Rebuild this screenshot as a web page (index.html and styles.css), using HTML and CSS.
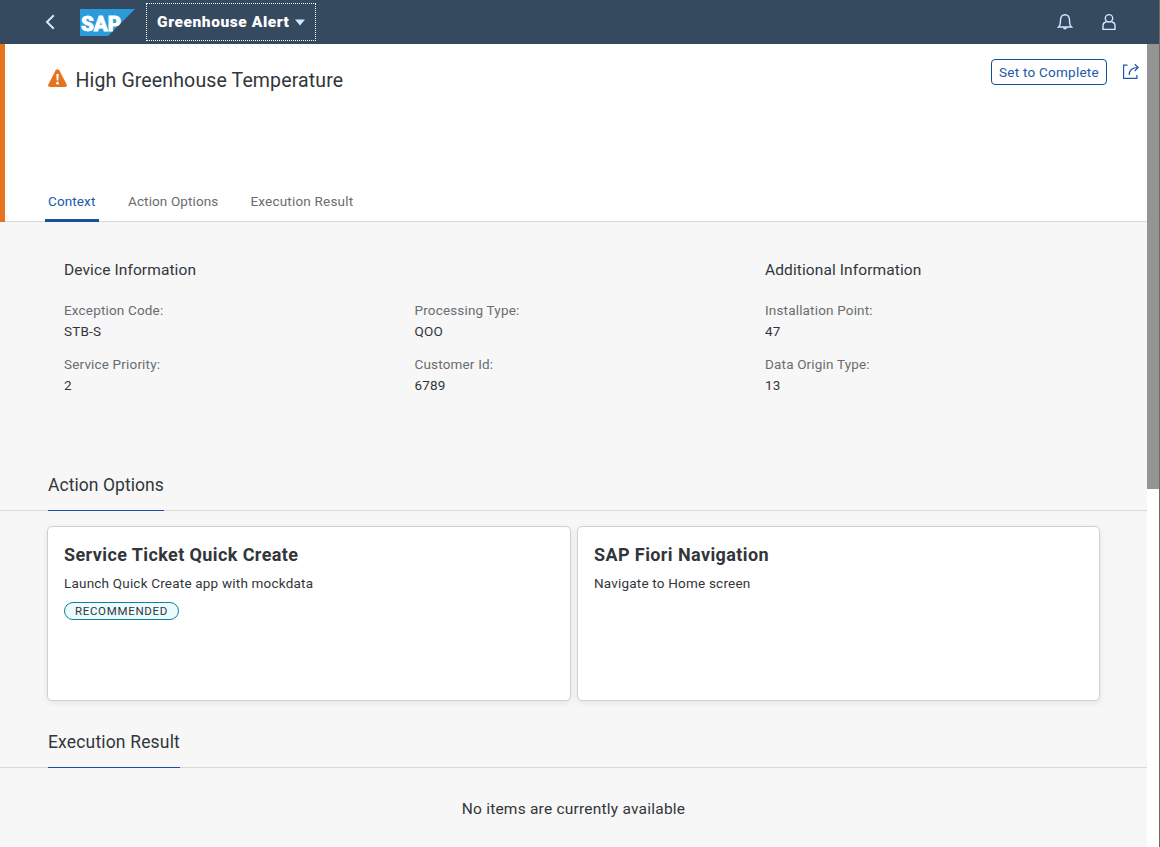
FILE: index.html
```html
<!DOCTYPE html>
<html lang="en">
<head>
<meta charset="utf-8">
<title>Greenhouse Alert</title>
<link rel="stylesheet" href="styles.css">
</head>
<body>
<div class="window">
  <header class="shell">
    <svg class="back" width="10" height="16" viewBox="0 0 10 16"><path d="M8.800 1.300 2 8l6.800 6.700" fill="none" stroke="#d1e8ff" stroke-width="2"/></svg>
    <svg class="logo" width="55" height="27" viewBox="0 0 55 27">
      <path d="M0 0H55L28 27H0Z" fill="#2b9bdc"/>
      <text class="logo-text" x="1" y="21.500" textLength="40" lengthAdjust="spacingAndGlyphs">SAP</text>
    </svg>
    <div class="app-title"><span class="app-name">Greenhouse Alert</span><svg width="10" height="7" viewBox="0 0 10 7"><path d="M0 .5H10L5 6.500Z" fill="#d1e8ff"/></svg></div>
    <div class="shell-tools">
      <svg width="16" height="18" viewBox="0 0 16 18"><path d="M1.500 14C3.500 12.500 3.500 11 3.500 7C3.500 3.500 5.500 1.800 8 1.800S12.500 3.500 12.500 7C12.500 11 12.500 12.500 14.500 14Z" fill="none" stroke="#d1e8ff" stroke-width="1.400"/><path d="M5.500 14.500h5Q9.500 16.500 8 16.500T5.500 14.500ZM7.200 1h1.600v1H7.200Z" fill="#d1e8ff"/></svg>
      <svg width="16" height="18" viewBox="0 0 16 18"><g fill="none" stroke="#d1e8ff" stroke-width="1.400"><circle cx="8" cy="5.300" r="3.700"/><path d="M5.500 8.700C3 9.300 2 10.500 2 12.500V16.400H14V12.500C14 10.500 13 9.300 10.500 8.700"/></g></svg>
    </div>
  </header>
  <div class="viewport">
    <main class="page">
      <section class="object-header">
        <div class="stripe"></div>
        <div class="header-body">
          <div class="title-row">
            <svg width="20" height="19" viewBox="0 0 20 19"><path d="M7.700 1.200Q9.500 -.8 11.300 1.200L18.700 15.400Q19.300 18 17 18H2Q-.3 18 .3 15.400Z" fill="#e6741f"/><path d="M8.300 5h2.400l-.4 6.500H8.700Z" fill="#fff"/><circle cx="9.500" cy="14.200" r="1.400" fill="#fff"/></svg>
            <h1 class="title">High Greenhouse Temperature</h1>
            <button class="complete">Set to Complete</button>
            <svg class="share" width="18" height="17" viewBox="0 0 18 17"><g fill="none" stroke="#2158a8" stroke-width="1.200"><path d="M5.500 2.100H1.600V15.400H14.900V12"/><path d="M7.200 12C7.200 7.500 10 4.500 16 4.500M12.700 1.200 16.200 4.500 12.700 8"/></g></svg>
          </div>
          <nav class="tabs">
            <a class="tab active">Context</a><a class="tab">Action Options</a><a class="tab result">Execution Result</a>
          </nav>
        </div>
      </section>
      <section class="context">
        <div class="group wide">
          <h2 class="group-title">Device Information</h2>
          <div class="fields two">
            <div><div class="label">Exception Code:</div><div class="value">STB-S</div></div>
            <div><div class="label">Processing Type:</div><div class="value">QOO</div></div>
            <div><div class="label">Service Priority:</div><div class="value">2</div></div>
            <div><div class="label">Customer Id:</div><div class="value">6789</div></div>
          </div>
        </div>
        <div class="group">
          <h2 class="group-title">Additional Information</h2>
          <div class="fields">
            <div><div class="label">Installation Point:</div><div class="value">47</div></div>
            <div><div class="label">Data Origin Type:</div><div class="value">13</div></div>
          </div>
        </div>
      </section>
      <div class="section-head"><h2 class="section-title actions">Action Options</h2></div>
      <section class="cards">
        <article class="card">
          <h3 class="card-title">Service Ticket Quick Create</h3>
          <p class="card-text">Launch Quick Create app with mockdata</p>
          <span class="tag">RECOMMENDED</span>
        </article>
        <article class="card">
          <h3 class="card-title">SAP Fiori Navigation</h3>
          <p class="card-text">Navigate to Home screen</p>
        </article>
      </section>
      <div class="section-head"><h2 class="section-title results">Execution Result</h2></div>
      <p class="empty">No items are currently available</p>
    </main>
    <div class="scrollbar"><div class="thumb"></div></div>
  </div>
</div>
</body>
</html>
```
FILE: styles.css
```css
* { box-sizing: border-box; }
body { margin: 0; font-family: Roboto, "Liberation Sans", sans-serif; font-size: 13.5px; color: #32363a; }
h1, h2, h3, p { margin: 0; font-weight: 400; }
svg { display: block; flex: none; }
.window { width: 1160px; height: 847px; display: flex; flex-direction: column; overflow: hidden; border-right: 1px solid #6b6b6b; }
.shell { height: 44px; flex: none; display: flex; align-items: center; background: #354a5f; padding-left: 45px; }
.logo { margin-left: 25px; }
.logo-text { font: 900 21px Roboto, sans-serif; fill: #fff; stroke: #fff; stroke-width: .8px; }
.app-title { margin-left: 11px; width: 170px; height: 38px; border: 1px dotted #fff; display: flex; align-items: center; padding-left: 10px; }
.app-name { width: 138px; font-size: 15.5px; font-weight: 900; line-height: 20px; padding-bottom: 1px; color: #fff; letter-spacing: .58px; white-space: nowrap; }
.shell-tools { margin-left: auto; display: flex; gap: 28px; padding-right: 42px; }
.viewport { flex: 1; display: flex; min-height: 0; }
.page { width: 1147px; background: #f7f7f7; }
.scrollbar { flex: 1; background: #fff; }
.thumb { height: 445px; background: #949494; }
.object-header { height: 178px; background: #fff; display: flex; }
.stripe { width: 5px; background: #e6741f; }
.header-body { flex: 1; display: flex; flex-direction: column; justify-content: space-between; border-bottom: 1px solid #d9d9d9; }
.title-row { display: flex; align-items: flex-start; padding: 15px 7px 0 43px; }
.title-row > svg:first-child { margin-top: 10px; }
.title { margin: 10px auto 0 7.500px; font-size: 19.5px; line-height: 24px; letter-spacing: .14px; }
.complete { width: 116px; height: 26px; border: 1px solid #0854a0; border-radius: 4px; padding: 0; background: #fff; color: #2158a8; font: 13.5px Roboto, sans-serif; letter-spacing: .24px; }
.share { margin: 4px 0 0 15px; }
.tabs { display: flex; gap: 26px; padding-left: 40px; }
.tab { height: 31px; padding: 0 3px; line-height: 20px; color: #6a6d70; letter-spacing: .12px; margin-bottom: -1px; }
.tab.active { width: 54px; color: #2158a8; border-bottom: 3px solid #1b4f9c; border-radius: 2px 2px 0 0; }
.tab.result { letter-spacing: .2px; }
.context { height: 240px; display: flex; padding: 38px 0 0 64px; }
.group.wide { width: 701px; }
.group-title { font-size: 15.5px; line-height: 20px; margin-bottom: 20px; letter-spacing: .1px; }
.fields { display: grid; row-gap: 12px; }
.fields.two { grid-template-columns: 350.500px 350.500px; }
.label, .value { line-height: 21px; letter-spacing: .17px; }
.label { color: #6a6d70; }
.section-head { height: 49px; padding-left: 48px; border-bottom: 1px solid #d9d9d9; display: flex; }
.section-title { font-size: 17.5px; line-height: 24px; padding-top: 11px; height: 49px; border-bottom: 1px solid #1b4f9c; white-space: nowrap; }
.section-title.actions { width: 116px; letter-spacing: .06px; }
.section-title.results { width: 132px; letter-spacing: .17px; }
.cards { display: grid; grid-template-columns: 524px 523px; gap: 6px; padding: 15px 0 18px 47px; }
.card { height: 175px; background: #fff; border: 1px solid #d0d0d0; border-radius: 5px; padding: 16px; box-shadow: 0 2px 6px rgba(0,0,0,.08); }
.card-title { font-size: 18px; line-height: 24px; font-weight: 700; letter-spacing: .4px; }
.card-text { margin-top: 6px; line-height: 20px; letter-spacing: .2px; }
.tag { display: flex; align-items: center; justify-content: center; width: 115px; height: 18px; margin-top: 9px; border: 1px solid #0f828f; border-radius: 9px; background: #ebfbff; font-size: 11.5px; letter-spacing: .7px; }
.empty { text-align: center; font-size: 15.5px; line-height: 20px; margin-top: 31px; letter-spacing: .22px; }
```
